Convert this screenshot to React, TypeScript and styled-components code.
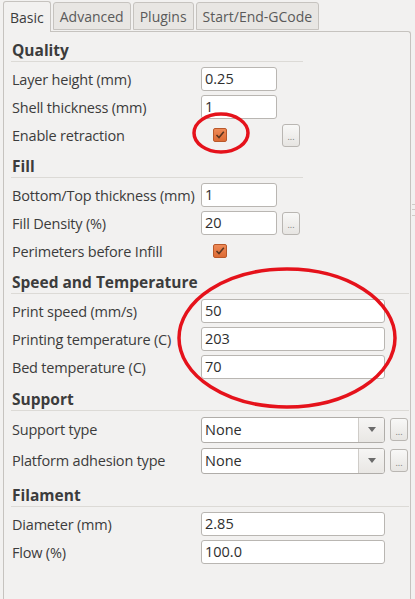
import { createGlobalStyle } from 'styled-components'
import styled from 'styled-components'

const GlobalStyle = createGlobalStyle`
  html, body {
    margin: 0;
    padding: 0;
    background: #f2f1f0;
  }
  body {
    font-family: 'Open Sans', 'DejaVu Sans', sans-serif;
    color: #3c3c3c;
  }
  * {
    box-sizing: border-box;
  }
`

const Window = styled.div`
  width: 415px;
  height: 599px;
  position: relative;
  overflow: hidden;
  padding: 0 4px 0 3px;
  display: flex;
  flex-direction: column;
`

const TabBar = styled.div`
  display: flex;
  align-items: flex-end;
  height: 31px;
  gap: 2px;
  position: relative;
  z-index: 1;
`

const Tab = styled.div<{ active?: boolean }>`
  height: ${(p) => (p.active ? '31px' : '28px')};
  margin-bottom: ${(p) => (p.active ? '-1px' : '1px')};
  padding: 0 6px;
  display: flex;
  align-items: center;
  font-size: 14px;
  color: ${(p) => (p.active ? '#3c3c3c' : '#5a5a5a')};
  background: ${(p) => (p.active ? '#f2f1f0' : '#e8e6e3')};
  border: 1px solid #c6c3bf;
  border-bottom: ${(p) => (p.active ? 'none' : '1px solid #c6c3bf')};
  border-radius: 3px 3px 0 0;
`

const Panel = styled.div`
  flex: 1;
  border: 1px solid #c6c3bf;
  border-bottom: none;
  border-radius: 0 3px 0 0;
  background: #f2f1f0;
  padding: 8px 2px 0 7px;
`

const Section = styled.div<{ gap?: number }>`
  margin-top: ${(p) => p.gap ?? 7}px;
`

const SectionTitle = styled.div<{ wide?: boolean }>`
  font-weight: 700;
  font-size: 15.5px;
  line-height: 20px;
  height: 22px;
  padding-left: 1px;
  width: ${(p) => (p.wide ? '398px' : '292px')};
  border-bottom: 1px solid #dcdad6;
  margin-bottom: 3px;
`

const Row = styled.div<{ tall?: boolean }>`
  display: grid;
  grid-template-columns: 190px auto auto;
  align-items: center;
  height: ${(p) => (p.tall ? '31px' : '28px')};
`

const Label = styled.span`
  font-size: 14.5px;
  padding-left: 1px;
  white-space: nowrap;
  letter-spacing: -0.2px;
`

const Field = styled.div`
  display: flex;
  align-items: center;
  gap: 5px;
`

const TextBox = styled.div<{ wide?: boolean }>`
  width: ${(p) => (p.wide ? '184px' : '76px')};
  height: 24px;
  background: #ffffff;
  border: 1px solid #b9b6b2;
  border-radius: 3px;
  font-size: 14.5px;
  line-height: 22px;
  padding-left: 3px;
  color: #2e2e2e;
`

const Combo = styled.div`
  width: 184px;
  height: 26px;
  display: flex;
  background: #ffffff;
  border: 1px solid #b0ada9;
  border-radius: 3px;
  overflow: hidden;
`

const ComboText = styled.div`
  flex: 1;
  font-size: 14.5px;
  line-height: 24px;
  padding-left: 3px;
  color: #2e2e2e;
`

const ComboArrow = styled.div`
  width: 26px;
  border-left: 1px solid #cfccc8;
  background: linear-gradient(#f6f5f4, #e9e7e4);
  display: flex;
  align-items: center;
  justify-content: center;
  &::after {
    content: '';
    border-left: 4px solid transparent;
    border-right: 4px solid transparent;
    border-top: 5px solid #6b6b6b;
  }
`

const DotsButton = styled.div`
  width: 18px;
  height: 23px;
  border: 1px solid #b9b6b2;
  border-radius: 3px;
  background: linear-gradient(#f8f8f7, #e7e5e2);
  font-size: 9px;
  color: #777;
  display: flex;
  align-items: center;
  justify-content: center;
  padding-top: 3px;
`

const CheckCell = styled.div`
  width: 76px;
  display: flex;
  align-items: center;
  padding-left: 12px;
`

const Check = styled.div`
  width: 14px;
  height: 14px;
  border-radius: 2px;
  background: linear-gradient(#ee8a57, #dd6b34);
  border: 1px solid #b9582a;
  display: flex;
  align-items: center;
  justify-content: center;
`

const Mark = styled.svg`
  position: absolute;
  left: 0;
  top: 0;
  pointer-events: none;
  z-index: 2;
`

const Splitter = styled.div`
  position: absolute;
  right: 0;
  top: 204px;
  width: 3px;
  height: 12px;
  border-top: 1px solid #cfccc8;
  border-bottom: 1px solid #cfccc8;
  &::after {
    content: '';
    display: block;
    margin-top: 4px;
    border-top: 1px solid #cfccc8;
  }
`

const Checkbox = () => (
  <Check>
    <svg width='10' height='10' viewBox='0 0 10 10'>
      <path d='M1.5 5 L4 7.5 L8.8 1.8' fill='none' stroke='#5a3520' strokeWidth='1.6' />
    </svg>
  </Check>
)

type FieldRow = {
  label: string
  value?: string
  wide?: boolean
  check?: boolean
  dots?: boolean
  combo?: boolean
}

type SectionData = {
  title: string
  wide?: boolean
  gap: number
  rows: FieldRow[]
}

const sections: SectionData[] = [
  {
    title: 'Quality',
    gap: 0,
    rows: [
      { label: 'Layer height (mm)', value: '0.25' },
      { label: 'Shell thickness (mm)', value: '1' },
      { label: 'Enable retraction', check: true, dots: true },
    ],
  },
  {
    title: 'Fill',
    gap: 7,
    rows: [
      { label: 'Bottom/Top thickness (mm)', value: '1' },
      { label: 'Fill Density (%)', value: '20', dots: true },
      { label: 'Perimeters before Infill', check: true },
    ],
  },
  {
    title: 'Speed and Temperature',
    wide: true,
    gap: 7,
    rows: [
      { label: 'Print speed (mm/s)', value: '50', wide: true },
      { label: 'Printing temperature (C)', value: '203', wide: true },
      { label: 'Bed temperature (C)', value: '70', wide: true },
    ],
  },
  {
    title: 'Support',
    wide: true,
    gap: 8,
    rows: [
      { label: 'Support type', value: 'None', combo: true, dots: true },
      { label: 'Platform adhesion type', value: 'None', combo: true, dots: true },
    ],
  },
  {
    title: 'Filament',
    wide: true,
    gap: 9,
    rows: [
      { label: 'Diameter (mm)', value: '2.85', wide: true },
      { label: 'Flow (%)', value: '100.0', wide: true },
    ],
  },
]

const tabs = ['Basic', 'Advanced', 'Plugins', 'Start/End-GCode']

export default function App() {
  return (
    <>
      <GlobalStyle />
      <Window>
        <TabBar>
          {tabs.map((t, i) => (
            <Tab key={t} active={i === 0}>
              {t}
            </Tab>
          ))}
        </TabBar>
        <Panel>
          {sections.map((s) => (
            <Section key={s.title} gap={s.gap}>
              <SectionTitle wide={s.wide}>{s.title}</SectionTitle>
              {s.rows.map((r) => (
                <Row key={r.label} tall={r.combo}>
                  <Label>{r.label}</Label>
                  <Field>
                    {r.check ? (
                      <CheckCell>
                        <Checkbox />
                      </CheckCell>
                    ) : r.combo ? (
                      <Combo>
                        <ComboText>{r.value}</ComboText>
                        <ComboArrow />
                      </Combo>
                    ) : (
                      <TextBox wide={r.wide}>{r.value}</TextBox>
                    )}
                    {r.dots && <DotsButton>...</DotsButton>}
                  </Field>
                </Row>
              ))}
            </Section>
          ))}
        </Panel>
        <Splitter />
        <Mark width='415' height='599'>
          <ellipse cx='221' cy='133' rx='27' ry='19' fill='none' stroke='#e5121b' strokeWidth='3.5' />
          <ellipse cx='287' cy='338' rx='108' ry='69' fill='none' stroke='#e5121b' strokeWidth='3.5' />
        </Mark>
      </Window>
    </>
  )
}
